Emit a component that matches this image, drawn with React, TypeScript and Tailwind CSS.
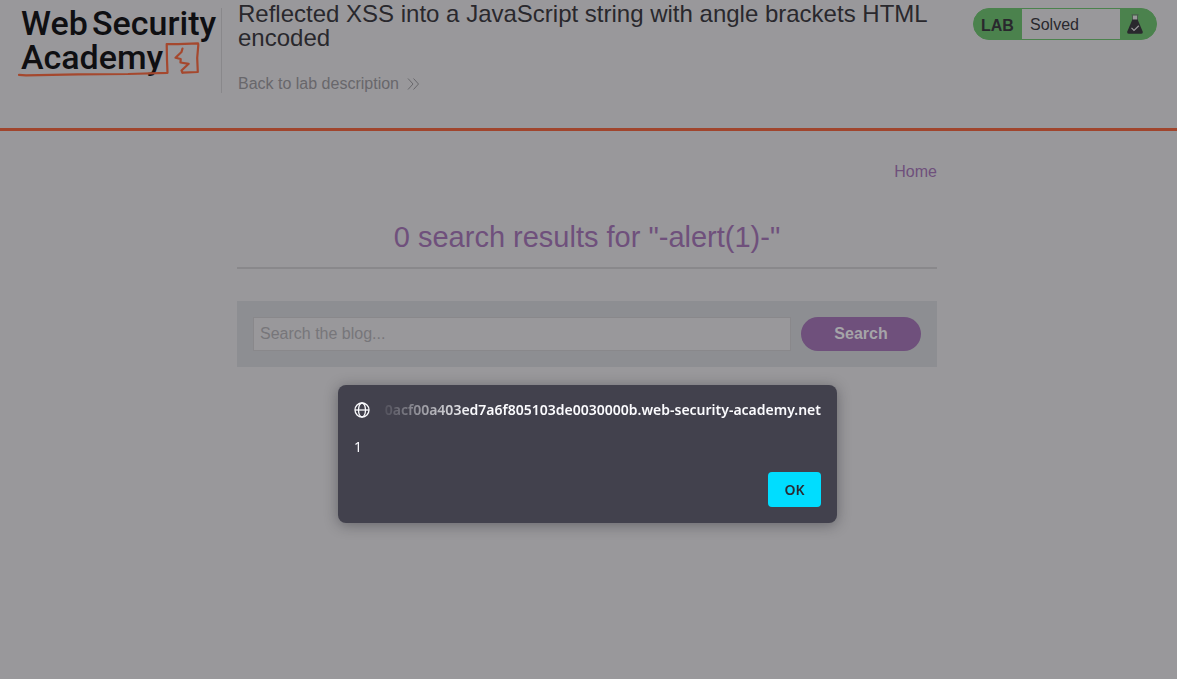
import { useState } from "react";

function AcademyLogo() {
  return (
    <svg
      viewBox="0 0 203 80"
      className="h-20 w-[203px]"
      role="img"
      aria-label="Web Security Academy"
    >
      <g
        fill="#0f0f12"
        fontFamily="Roboto, 'Liberation Sans', sans-serif"
        fontSize="34"
        fontWeight="500"
      >
        <text x="3" y="35">Web</text>
        <text x="74" y="35">Security</text>
        <text x="3" y="69">Academy</text>
      </g>
      <g
        fill="none"
        stroke="#a5482e"
        strokeLinejoin="round"
        strokeLinecap="round"
      >
        <path
          strokeWidth="2.2"
          d="M1 74.800L8 75.300L60 74.400L110 74L149.500 72.800L149 60L148.700 44L160 44.200L180 43.300L180.300 45L179.200 58L179.800 72L164.500 72.600"
        />
        <path
          strokeWidth="2.2"
          d="M164.500 48.500L163.500 52L157.500 57.700L162.700 59L162.500 62.500L170.700 63.800L163.500 70.500L164.500 72.600"
        />
      </g>
    </svg>
  );
}

function Flask() {
  return (
    <svg viewBox="0 0 18 22" className="h-[22px] w-[18px]" aria-hidden="true">
      <path d="M7 2.500h4v5H7z" fill="#99989b" />
      <path
        d="M5.500 1.800h7M6.500 2v5M11.500 2v5"
        stroke="#4b5c4f"
        strokeWidth="1"
        fill="none"
      />
      <path
        d="M6.400 6.500h5.200L16.800 18.700q.4 2-1.500 2H2.700q-1.900 0-1.500-2z"
        fill="#29282d"
      />
      <path
        d="M5.500 14.800l2.500 2.600 4.800-4.700"
        stroke="#99989b"
        strokeWidth="1.200"
        fill="none"
      />
    </svg>
  );
}

function Globe() {
  return (
    <svg
      viewBox="0 0 16 16"
      className="size-4 shrink-0"
      fill="none"
      stroke="#fbfbfe"
      strokeWidth="1.300"
      aria-hidden="true"
    >
      <circle cx="8" cy="8" r="7" />
      <ellipse cx="8" cy="8" rx="3.500" ry="7" />
      <path d="M1 8h14" />
    </svg>
  );
}

function Header() {
  return (
    <header className="flex min-h-[131px] items-start border-b-3 border-[#a0452d] pr-5 pl-[18px]">
      <a href="#academy" className="shrink-0">
        <AcademyLogo />
      </a>
      <div className="mt-2 h-[85px] border-l border-[#89888b]" />
      <div className="min-w-0 flex-1 px-4 pt-0.5">
        <h1 className="text-2xl leading-6 text-[#29282d]">
          Reflected XSS into a JavaScript string with angle brackets HTML
          encoded
        </h1>
        <a
          href="#description"
          className="mt-[22px] inline-flex items-center gap-2 text-base text-[#68676b]"
        >
          Back to lab description
          <svg
            viewBox="0 0 12 12"
            className="size-3"
            fill="none"
            stroke="currentColor"
            aria-hidden="true"
          >
            <path d="M1 .5l5 5.500-5 5.500M6.500 .5l5 5.500-5 5.500" />
          </svg>
        </a>
      </div>
      <div className="mt-2 flex h-8 w-[184px] shrink-0 items-stretch overflow-hidden rounded-full border border-[#4b824d] bg-[#4b824d] text-[#29282d]">
        <span className="w-12 pt-[5px] pl-[7px] font-bold">LAB</span>
        <p className="flex-1 bg-[#99989b] pt-1 pl-2">Solved</p>
        <span className="flex w-9 items-center pl-1.5">
          <Flask />
        </span>
      </div>
    </header>
  );
}

function AlertDialog({ onClose }: { onClose: () => void }) {
  return (
    <div className="fixed inset-0 flex items-start justify-center pt-[385px] pr-0.5">
      <div
        role="alertdialog"
        aria-modal="true"
        aria-labelledby="alert-origin"
        aria-describedby="alert-message"
        className="w-[499px] rounded-lg bg-[#42414d] p-4 font-['Noto_Sans',sans-serif] text-sm text-[#fbfbfe] shadow-[0_2px_14px_rgba(28,27,34,0.4)]"
      >
        <div className="flex items-center gap-1.5">
          <Globe />
          <div className="flex min-w-0 flex-1 justify-end overflow-hidden mask-[linear-gradient(to_right,transparent,black_96px)]">
            <h2 id="alert-origin" className="leading-[18px] font-semibold whitespace-nowrap">
              0acf00a403ed7a6f805103de0030000b.web-security-academy.net
            </h2>
          </div>
        </div>
        <p id="alert-message" className="mt-[18px] leading-5">
          1
        </p>
        <div className="mt-[15px] flex justify-end">
          <button
            type="button"
            onClick={onClose}
            className="h-[35px] w-[53px] rounded bg-[#00ddff] font-semibold text-[#2b2a33]"
          >
            OK
          </button>
        </div>
      </div>
    </div>
  );
}

export default function App() {
  const [open, setOpen] = useState(true);
  return (
    <div className="min-h-screen bg-[#99989b] font-['Liberation_Sans',Arial,sans-serif] text-base">
      <Header />
      <main className="pr-[3px]">
        <div className="mx-auto max-w-[700px]">
          <nav className="flex justify-end pt-[29px]">
            <a href="#home" className="text-[#6f507c]">
              Home
            </a>
          </nav>
          <h2 className="mt-[33px] border-b-2 border-[#89888b] pb-2.5 text-center text-[29px] leading-10 text-[#6f507c]">
            0 search results for "-alert(1)-"
          </h2>
          <form
            className="mt-8 flex gap-2.5 bg-[#8d8e92] p-4"
            onSubmit={(e) => e.preventDefault()}
          >
            <input
              type="text"
              aria-label="Search the blog"
              placeholder="Search the blog..."
              className="h-[34px] min-w-0 flex-1 border border-[#89888b] bg-[#99989b] px-1.5 text-[#29282d] placeholder:text-[#77767a]"
            />
            <button
              type="submit"
              className="h-[34px] w-[120px] rounded-full bg-[#6f507c] font-bold text-[#a5a4a8]"
            >
              Search
            </button>
          </form>
        </div>
      </main>
      {open && <AlertDialog onClose={() => setOpen(false)} />}
    </div>
  );
}
